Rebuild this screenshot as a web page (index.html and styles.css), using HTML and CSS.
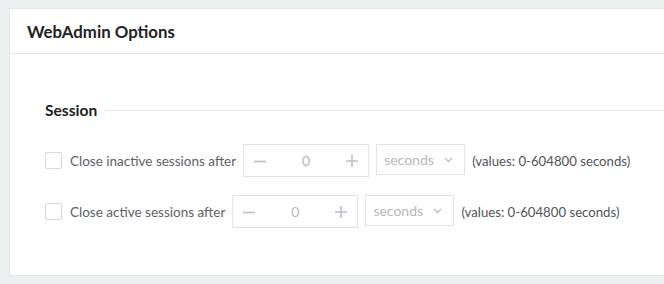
FILE: index.html
```html
<!DOCTYPE html>
<html>
<head>
<meta charset="utf-8">
<link rel="stylesheet" href="styles.css">
</head>
<body>
<div class="card">
  <div class="card-header"><h1 class="title">WebAdmin Options</h1></div>
  <div class="card-body">
    <div class="section-head"><span class="section-title">Session</span><span class="section-line"></span></div>
    <div class="row first">
      <span class="checkbox"></span>
      <span class="label">Close inactive sessions after</span>
      <div class="number">
        <span class="step"><svg width="12" height="12" viewBox="0 0 12 12"><path d="M0 6.5h12" stroke="#b9bfcc" stroke-width="1.6"/></svg></span>
        <span class="value">0</span>
        <span class="step"><svg width="12" height="12" viewBox="0 0 12 12"><path d="M0 6h12M6 0v12" stroke="#b9bfcc" stroke-width="1.6"/></svg></span>
      </div>
      <div class="select"><span class="sel-text">seconds</span><svg width="9" height="6" viewBox="0 0 9 6"><path d="M1 1l3.5 3.5L8 1" fill="none" stroke="#b9bfcc" stroke-width="1.4"/></svg></div>
      <span class="hint">(values: 0-604800 seconds)</span>
    </div>
    <div class="row">
      <span class="checkbox"></span>
      <span class="label">Close active sessions after</span>
      <div class="number">
        <span class="step"><svg width="12" height="12" viewBox="0 0 12 12"><path d="M0 6.5h12" stroke="#b9bfcc" stroke-width="1.6"/></svg></span>
        <span class="value">0</span>
        <span class="step"><svg width="12" height="12" viewBox="0 0 12 12"><path d="M0 6h12M6 0v12" stroke="#b9bfcc" stroke-width="1.6"/></svg></span>
      </div>
      <div class="select"><span class="sel-text">seconds</span><svg width="9" height="6" viewBox="0 0 9 6"><path d="M1 1l3.5 3.5L8 1" fill="none" stroke="#b9bfcc" stroke-width="1.4"/></svg></div>
      <span class="hint">(values: 0-604800 seconds)</span>
    </div>
  </div>
</div>
</body>
</html>
```

FILE: styles.css
```css
html, body { margin: 0; padding: 0; }
body {
  background: #edf0f1;
  font-family: "Lato", "Open Sans", sans-serif;
  width: 664px;
  height: 284px;
  overflow: hidden;
  padding: 8px 0 0 9px;
  box-sizing: border-box;
}
.card {
  background: #fff;
  border: 1px solid #e3e6e8;
  border-right: none;
  box-sizing: border-box;
  height: 268px;
}
.card-header {
  height: 45px;
  border-bottom: 1px solid #e3e5e7;
  display: flex;
  align-items: center;
  padding-left: 17px;
  box-sizing: border-box;
}
.title {
  margin: 0;
  font-size: 16.8px;
  font-weight: 700;
  color: #222;
}
.card-body {
  padding: 46px 0 0 35px;
}
.section-head {
  display: flex;
  align-items: center;
  height: 20px;
}
.section-title {
  font-size: 15.6px;
  font-weight: 700;
  color: #222;
}
.section-line {
  flex: 1;
  height: 1px;
  background: #e3e5e7;
  margin-left: 8px;
}
.row {
  display: flex;
  align-items: center;
  height: 33px;
  margin-top: 18px;
}
.row.first { margin-top: 24px; }
.checkbox {
  width: 17px;
  height: 17px;
  border: 1px solid #d4d6d9;
  box-sizing: border-box;
  border-radius: 2px;
  margin-right: 8px;
}
.label {
  font-size: 13.5px;
  color: #5d6166;
  margin-right: 7px;
}
.number {
  width: 126px;
  height: 33px;
  border: 1px solid #e0e2e4;
  box-sizing: border-box;
  display: flex;
  align-items: center;
  justify-content: space-between;
  padding: 0 10px;
  margin-right: 7px;
}
.step { display: flex; }
.value {
  font-size: 14px;
  color: #b5b8bc;
}
.select {
  width: 89px;
  height: 31px;
  border: 1px solid #e0e2e4;
  box-sizing: border-box;
  display: flex;
  align-items: center;
  justify-content: space-between;
  padding: 0 11px 0 7px;
  margin-right: 7px;
  align-self: flex-start;
}
.sel-text {
  font-size: 14px;
  color: #b5b8bc;
}
.hint {
  font-size: 13.2px;
  color: #4f5358;
}
```
